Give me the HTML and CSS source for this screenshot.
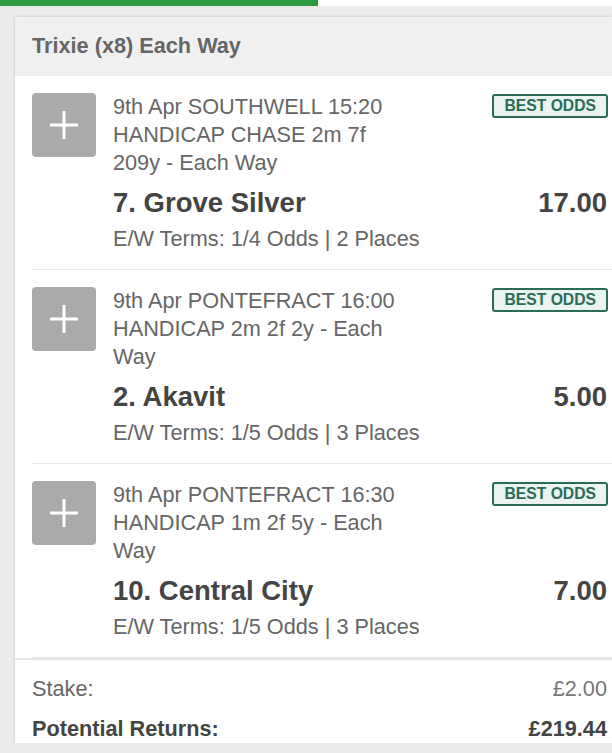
FILE: index.html
```html
<!DOCTYPE html>
<html lang="en">
<head>
<meta charset="utf-8">
<title>Trixie (x8) Each Way</title>
<link rel="stylesheet" href="styles.css">
</head>
<body>
<div class="tabs"><div class="tab-active"></div></div>
<div class="card">
  <div class="card-head">Trixie (x8) Each Way</div>

  <div class="leg">
    <div class="leg-add"><svg width="64" height="64" viewBox="0 0 64 64"><path d="M18 32H46M32 18V46" stroke="#fff" stroke-width="3" fill="none"/></svg></div>
    <div class="leg-body">
      <div class="leg-top">
        <div class="leg-event">9th Apr SOUTHWELL 15:20 HANDICAP CHASE 2m 7f 209y - Each Way</div>
        <span class="badge">BEST ODDS</span>
      </div>
      <div class="leg-sel"><span>7. Grove Silver</span><span class="sel-odds">17.00</span></div>
      <div class="leg-terms">E/W Terms: 1/4 Odds | 2 Places</div>
    </div>
  </div>

  <div class="leg">
    <div class="leg-add"><svg width="64" height="64" viewBox="0 0 64 64"><path d="M18 32H46M32 18V46" stroke="#fff" stroke-width="3" fill="none"/></svg></div>
    <div class="leg-body">
      <div class="leg-top">
        <div class="leg-event">9th Apr PONTEFRACT 16:00 HANDICAP 2m 2f 2y - Each Way</div>
        <span class="badge">BEST ODDS</span>
      </div>
      <div class="leg-sel"><span>2. Akavit</span><span class="sel-odds">5.00</span></div>
      <div class="leg-terms">E/W Terms: 1/5 Odds | 3 Places</div>
    </div>
  </div>

  <div class="leg">
    <div class="leg-add"><svg width="64" height="64" viewBox="0 0 64 64"><path d="M18 32H46M32 18V46" stroke="#fff" stroke-width="3" fill="none"/></svg></div>
    <div class="leg-body">
      <div class="leg-top">
        <div class="leg-event">9th Apr PONTEFRACT 16:30 HANDICAP 1m 2f 5y - Each Way</div>
        <span class="badge">BEST ODDS</span>
      </div>
      <div class="leg-sel"><span>10. Central City</span><span class="sel-odds">7.00</span></div>
      <div class="leg-terms">E/W Terms: 1/5 Odds | 3 Places</div>
    </div>
  </div>

  <div class="summary">
    <div class="sum-row"><span>Stake:</span><span class="sum-val">£2.00</span></div>
    <div class="sum-row sum-total"><span>Potential Returns:</span><span>£219.44</span></div>
  </div>
</div>
</body>
</html>
```
FILE: styles.css
```css
html, body {
  margin: 0;
  padding: 0;
}
body {
  background: #ebebeb;
  font-family: "Liberation Sans", Arial, sans-serif;
  font-size: 21.7px;
  line-height: 28px;
  color: #666;
  overflow: hidden;
}
.tabs {
  height: 6px;
  background: #fff;
}
.tab-active {
  width: 318px;
  height: 6px;
  background: #2e9a3f;
}
.card {
  margin: 11px 0 0 15px;
  background: #fff;
  box-shadow: 0 0 3px rgba(0, 0, 0, 0.18);
}
.card-head {
  background: #f0f0f0;
  padding: 15px 17px 16px;
  font-weight: bold;
  color: #666;
}
.leg {
  display: flex;
  gap: 17px;
  margin-left: 17px;
  padding: 17px 0 16px;
  border-bottom: 1px solid #e6e6e6;
}
.leg:last-of-type {
  border-bottom: none;
}
.leg-add {
  flex: none;
  width: 64px;
  height: 64px;
  border-radius: 4px;
  background: #aaaaaa;
}
.leg-add svg {
  display: block;
}
.leg-body {
  flex: 1;
  padding-right: 4px;
}
.leg-top {
  display: flex;
  justify-content: space-between;
  align-items: flex-start;
}
.leg-event {
  max-width: 295px;
}
.badge {
  margin-top: 1px;
  border: 2px solid #2b6c59;
  border-radius: 3px;
  background: #eaf3ef;
  color: #2b6c59;
  font-size: 15.7px;
  font-weight: bold;
  line-height: 20px;
  padding: 0 10px;
}
.leg-sel {
  display: flex;
  justify-content: space-between;
  margin-top: 10px;
  font-size: 27.5px;
  line-height: 32px;
  font-weight: bold;
  color: #444;
}
.sel-odds {
  margin-right: 1px;
}
.leg-terms {
  margin-top: 6px;
}
.summary {
  border-top: 2px solid #e3e3e8;
  padding: 15px 5px 0 17px;
  display: flex;
  flex-direction: column;
  gap: 12px;
}
.sum-row {
  display: flex;
  justify-content: space-between;
}
.sum-val {
  color: #777;
}
.sum-total {
  font-weight: bold;
  color: #444;
}
```
